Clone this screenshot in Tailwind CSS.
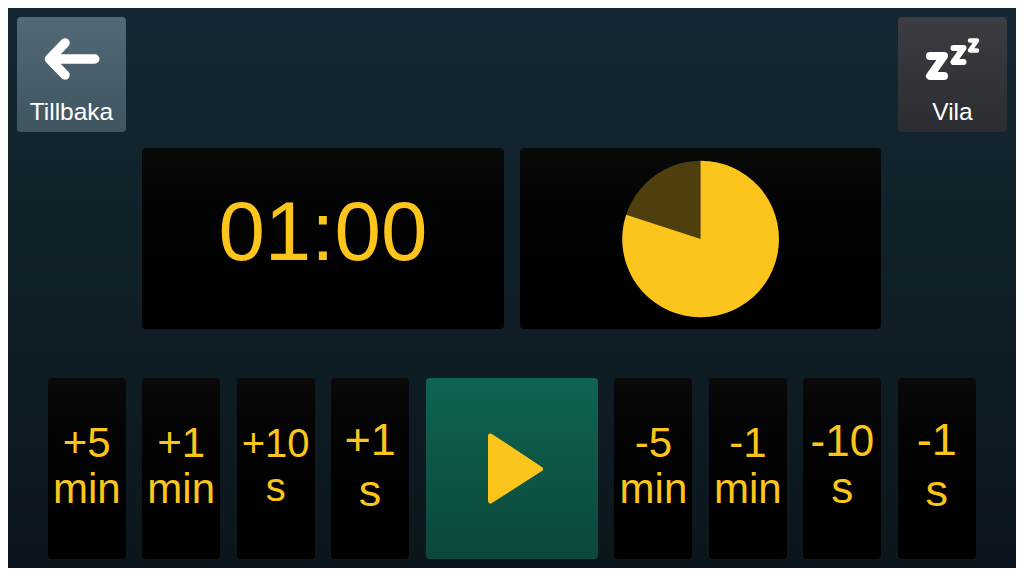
<!doctype html>
<html lang="en">
<head>
<meta charset="utf-8">
<title>Timer</title>
<script src="https://cdn.jsdelivr.net/npm/@tailwindcss/browser@4"></script>
</head>
<body class="bg-white font-['Liberation_Sans',sans-serif]">
  <div class="m-2 h-[560px] w-[1008px] bg-gradient-to-b from-[#142833] to-[#0b161c] px-[9px] py-[9px]">
    <div class="flex justify-between">
      <button class="flex h-[115px] w-[109px] flex-col items-center rounded-[4px] bg-gradient-to-b from-[#526a76] to-[#3f5560] text-[24.5px] text-white">
        <svg class="mt-[19px] h-[46px] w-[60px]" viewBox="0 0 60 46" fill="none" stroke="#fff" stroke-width="9.5" stroke-linecap="round" stroke-linejoin="round"><path d="M52.75 23H8M23 7 7.5 23 23 39"/></svg>
        <span class="mt-[16px] leading-[28px]">Tillbaka</span>
      </button>
      <button class="flex h-[115px] w-[109px] flex-col items-center rounded-[4px] bg-gradient-to-b from-[#3c3d42] to-[#2c2d31] text-[24.5px] text-white">
        <svg class="mt-[19px] h-[46px] w-[60px]" viewBox="0 0 60 46" fill="none" stroke="#fff" stroke-linecap="round" stroke-linejoin="round"><path stroke-width="8" d="M7 20h14L7 40h14"/><path stroke-width="6" d="M30.5 12h10L30.5 26h10"/><path stroke-width="4.5" d="M47 4.5h7L47 14.5h7"/></svg>
        <span class="mt-[16px] leading-[28px]">Vila</span>
      </button>
    </div>
    <div class="ml-[30.75px] mt-[16px] grid h-[181px] w-[928.05px] grid-cols-10 gap-x-[16.45px]">
      <div class="col-span-4 col-start-2 flex items-center justify-center rounded-[4px] bg-gradient-to-b from-[#0a0a0a] to-black pb-[14px] text-[83.5px] leading-[1.15] text-[#fcc51c]">01:00</div>
      <div class="col-span-4 flex items-center justify-center rounded-[4px] bg-gradient-to-b from-[#0a0a0a] to-black">
        <svg class="h-[158px] w-[158px]" viewBox="0 0 158 158"><circle cx="78.6" cy="79" r="78.3" fill="#4f3e0e"/><path d="M78.6 79V.7A78.3 78.3 0 1 1 4.13 54.8Z" fill="#fcc51c"/></svg>
      </div>
    </div>
    <div class="ml-[30.75px] mt-[49px] grid h-[181px] w-[928.05px] grid-cols-10 gap-x-[16.45px] text-center text-[#fcc51c]">
      <button class="rounded-[4px] bg-gradient-to-b from-[#0a0a0a] to-black pb-[6px] text-[42px] leading-[46px]">+5<br>min</button>
      <button class="rounded-[4px] bg-gradient-to-b from-[#0a0a0a] to-black pb-[6px] text-[42px] leading-[46px]">+1<br>min</button>
      <button class="rounded-[4px] bg-gradient-to-b from-[#0a0a0a] to-black pb-[7px] text-[40px] leading-[44px]">+10<br>s</button>
      <button class="rounded-[4px] bg-gradient-to-b from-[#0a0a0a] to-black pb-[8px] text-[45px] leading-[51px]">+1<br>s</button>
      <button class="col-span-2 flex items-center justify-center rounded-[4px] bg-gradient-to-b from-[#0f6451] to-[#0b483b]">
        <svg class="h-[72px] w-[66px]" viewBox="0 0 66 72"><path d="M11.5 3 61.5 36 11.5 68Z" fill="#fcc51c" stroke="#fcc51c" stroke-width="5" stroke-linejoin="round"/></svg>
      </button>
      <button class="rounded-[4px] bg-gradient-to-b from-[#0a0a0a] to-black pb-[6px] text-[42px] leading-[46px]">-5<br>min</button>
      <button class="rounded-[4px] bg-gradient-to-b from-[#0a0a0a] to-black pb-[6px] text-[42px] leading-[46px]">-1<br>min</button>
      <button class="rounded-[4px] bg-gradient-to-b from-[#0a0a0a] to-black pb-[9px] text-[44px] leading-[47px]">-10<br>s</button>
      <button class="rounded-[4px] bg-gradient-to-b from-[#0a0a0a] to-black pb-[8px] text-[45px] leading-[51px]">-1<br>s</button>
    </div>
  </div>
</body>
</html>
